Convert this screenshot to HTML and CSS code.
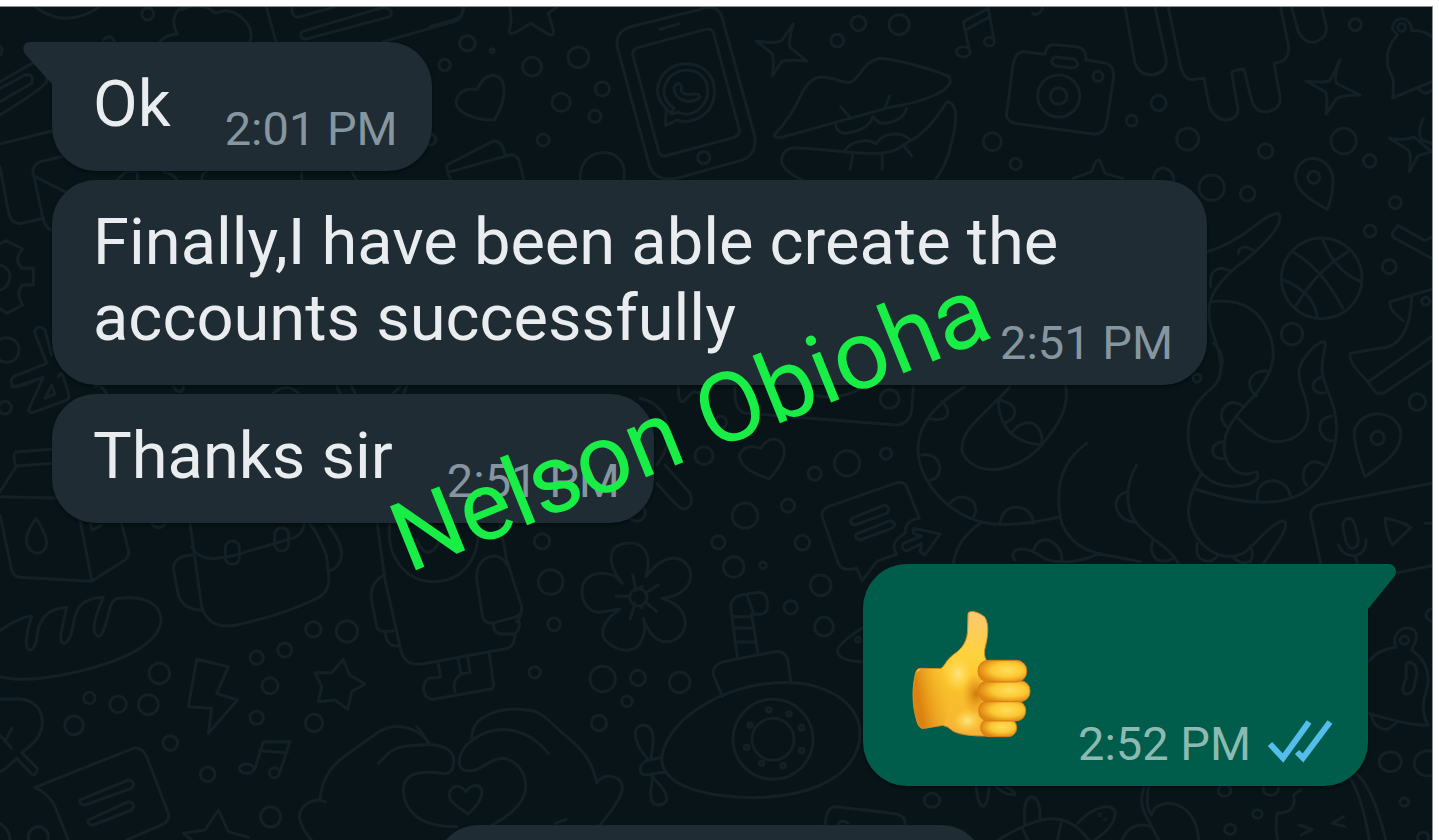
FILE: index.html
```
<!DOCTYPE html>
<html lang="en">
<head>
<meta charset="utf-8">
<title>Chat</title>
<link rel="stylesheet" href="styles.css">
</head>
<body>
<main class="chat">
<svg class="wallpaper" viewBox="0 7 1432 833" preserveAspectRatio="xMinYMin slice" aria-hidden="true">
<g transform="scale(.33333)">
<path d="M108 22Q150 55 200 55Q255 52 295 22M480 125Q500 102 532 102Q505 50 545 22M545 30Q600 0 648 40Q680 22 715 45Q765 80 750 125M800 25L828 125M875 22Q875 55 900 50L1000 22M905 95L1150 22Q1185 30 1170 50L915 118Q895 110 905 95M1388 22Q1390 55 1365 64L1150 125M310 120Q330 100 342 122"/>
<circle cx="443" cy="42" r="18"/><circle cx="1402" cy="130" r="23"/><circle cx="1334" cy="195" r="17"/><circle cx="1290" cy="418" r="17"/><circle cx="-12" cy="152" r="18"/>
<path d="M0 245L100 188Q145 215 140 245Q130 265 0 345M0 265L75 225Q105 220 95 250L0 305M0 432L155 393M0 500L25 635Q35 675 65 670L130 655M195 468L120 485Q90 500 102 530L130 660Q140 690 158 690M105 530L200 578M350 540L378 515H412V540M490 515Q520 520 530 540M605 540Q605 520 620 515M905 515V540M1055 515L1070 540"/>
</g>
<g transform="translate(430) scale(.338 .33333)">
<path d="M100 22Q100 50 70 60L0 80M235 22Q245 55 235 88Q230 105 252 98L298 70L345 100Q370 112 365 90L350 40L375 22M140 268Q160 220 195 227C230 240 225 305 190 360C135 362 70 335 78 300Q90 260 140 268ZM50 495L190 422Q215 425 222 465M62 515L235 465Q262 460 268 500L278 540M50 495Q50 520 62 540M445 540C435 430 595 430 573 540"/>
<circle cx="111" cy="130" r="23"/><circle cx="43" cy="195" r="17"/><circle cx="302" cy="200" r="28"/><circle cx="439" cy="172" r="31"/><circle cx="510" cy="267" r="21"/><circle cx="388" cy="307" r="27"/><circle cx="488" cy="349" r="18"/><circle cx="335" cy="420" r="18"/><circle cx="184" cy="152" r="6"/>
<path d="M800 28Q845 10 862 45L960 405Q970 460 925 480L740 532Q670 550 650 500L555 145Q545 95 595 80ZM815 88Q835 82 840 103L915 388Q918 410 890 415L695 468Q682 470 677 455L600 165Q598 148 615 143ZM680 88L735 72M715 342Q672 305 673 270C680 165 840 165 842 272C840 350 770 375 730 360L697 377L698 335M692 272C700 190 820 190 822 272C820 330 765 355 735 336L712 343L722 325Q692 305 692 272M722 262Q735 240 745 260Q735 285 775 283Q805 278 795 295C765 318 720 295 722 262Z"/><circle cx="810" cy="473" r="18"/>
<path d="M1075 72Q1060 120 1065 142L1115 183Q1060 178 1040 185L1013 228Q1020 180 1012 160L965 123Q1020 132 1040 122ZM1018 405Q1070 350 1100 280Q1130 225 1165 232C1200 235 1220 250 1245 247C1275 230 1285 180 1335 175C1390 180 1510 215 1535 230C1560 265 1470 305 1360 322L1040 412Q1020 415 1018 405ZM1200 375Q1205 400 1230 400Q1300 390 1310 350M1312 350Q1325 370 1340 370Q1400 365 1410 325M1215 320L1245 355M1360 288L1345 325M1225 455C1245 420 1300 415 1320 432C1335 400 1395 390 1420 420M1100 540Q1040 510 1040 480Q1045 435 1100 445C1200 447 1350 485 1400 435C1470 400 1500 350 1530 305Q1575 310 1540 440Q1530 490 1495 540M1250 467L1243 507M1338 467V507M1400 435L1425 467"/>
<circle cx="1205" cy="122" r="19"/><circle cx="1268" cy="70" r="22"/><circle cx="1388" cy="74" r="30"/>
</g>
<g transform="translate(940) scale(.33333)">
<path d="M90 160L70 65L145 25L162 120M80 88L150 50M200 340L218 200Q225 155 250 155L315 163Q320 130 345 134L410 140Q442 145 437 180L500 190Q525 200 520 235L500 370Q490 405 460 402L225 370Q195 360 200 340ZM345 170L405 178Q425 200 395 204L345 197Q325 185 345 170ZM555 22L585 190Q600 228 640 224Q685 215 678 175L645 22M685 22L720 190Q730 245 765 238L792 235L808 320Q830 370 875 357Q900 345 892 315L875 220Q875 210 912 208L935 300Q945 340 985 335Q1025 325 1020 290L1002 190Q1052 185 1045 135L1022 22M1055 22L1075 95Q1095 135 1130 125Q1165 110 1158 75L1145 22M1200 180Q1180 235 1190 250L1260 285Q1210 285 1190 295L1158 343Q1165 290 1155 275L1098 243Q1150 250 1170 242ZM1475 110Q1450 90 1415 92C1415 45 1355 45 1358 88L1372 105C1330 150 1340 200 1352 220Q1365 240 1358 294L1475 245M1435 265Q1455 290 1475 270M1450 355Q1430 400 1445 420L1475 430M1475 455L1435 467L1408 515Q1415 465 1405 450L1348 415Q1400 422 1420 410ZM400 535L455 515Q470 470 480 482L495 520L548 535M640 535Q645 505 670 503Q700 510 702 540M1162 628Q1185 570 1177 525C1160 460 1080 460 1067 520C1060 570 1110 600 1162 628ZM278 40Q295 50 308 25"/>
<ellipse cx="70" cy="155" rx="21" ry="15"/><ellipse cx="148" cy="125" rx="15" ry="13"/><circle cx="356" cy="288" r="63"/><circle cx="356" cy="288" r="25"/><circle cx="474" cy="229" r="15"/><circle cx="157" cy="425" r="27"/><circle cx="227" cy="492" r="17"/><circle cx="656" cy="309" r="23"/><circle cx="575" cy="362" r="16"/><circle cx="743" cy="417" r="33"/><circle cx="977" cy="453" r="22"/><circle cx="1211" cy="423" r="38"/><circle cx="1289" cy="483" r="19"/><circle cx="1246" cy="74" r="18"/><circle cx="1385" cy="82" r="12"/><circle cx="1121" cy="532" r="18"/><circle cx="815" cy="563" r="38"/><circle cx="923" cy="581" r="22"/><circle cx="1366" cy="608" r="18"/>
</g>
<g transform="translate(1120 200) scale(.33333)">
<path d="M262 155C380 120 420 45 475 40C500 70 420 150 350 200C280 260 250 310 275 390C300 460 320 520 280 560C220 610 200 650 205 720C215 820 280 865 350 858C410 855 420 830 410 815C360 835 320 810 312 750C310 680 355 640 400 590C460 520 475 460 445 395Q400 290 275 305M355 160Q355 140 380 142L400 150M272 260Q265 205 310 205L330 212M450 515Q405 505 390 540Q385 570 410 588M372 620Q330 590 308 630Q295 660 325 685M310 725Q270 730 280 762Q290 780 318 775M280 430Q320 460 300 520M355 655C410 710 450 740 510 718C575 690 570 640 555 590C530 530 530 500 560 465Q590 425 612 425C625 435 600 470 607 520C615 570 650 610 650 690C645 800 580 880 500 898C420 920 310 895 225 867M608 530Q575 540 580 565Q595 585 615 578M635 648Q595 655 600 690Q610 725 642 723M612 795Q570 770 552 810Q545 840 560 855M412 898Q410 840 465 842Q505 850 512 890M245 820Q195 900 208 960C230 1040 300 1090 370 1060C410 1030 450 970 490 962C515 975 470 1030 430 1092M232 1030Q225 1060 240 1075Q270 1095 290 1070M340 1072Q360 1095 390 1085Q405 1060 390 1038M50 795C15 850 15 930 50 970C90 1020 150 1040 175 1090M22 875Q-15 885 -12 920Q0 965 50 967M100 1018Q85 1055 110 1078Q135 1090 160 1075"/>
<circle cx="605" cy="235" r="121"/><path d="M518 155Q610 210 668 325M608 117Q640 210 722 245M685 155Q590 210 525 322M490 240Q580 275 592 350"/>
<circle cx="750" cy="93" r="18"/><circle cx="808" cy="200" r="21"/><circle cx="516" cy="402" r="32"/><circle cx="231" cy="534" r="12"/><circle cx="892" cy="606" r="25"/><circle cx="773" cy="714" r="20"/><circle cx="917" cy="304" r="12"/>
<path d="M935 175L820 112Q810 100 835 77L915 122L935 112M935 268L810 305Q805 330 850 362M875 290Q870 440 780 445L690 460Q685 490 745 545L935 410M742 545L770 580H790L935 482M735 830Q695 720 705 685C740 610 850 640 842 710C840 760 780 800 735 830ZM935 850L610 912Q565 920 573 955L602 1090M830 1118L935 1097M668 975Q675 950 695 957Q705 965 715 1020Q715 1045 695 1045Q678 1045 668 975ZM655 1035Q670 1070 705 1067Q740 1060 738 1020M705 1067L712 1090M795 955Q835 960 873 982L818 1035Q800 1010 795 955ZM915 970H935"/>
</g>
<g transform="translate(640 380) scale(.33333)">
<path d="M115 20Q115 70 130 65L160 35L185 40M0 55Q50 65 75 110Q95 170 70 225L50 255M75 255L150 340Q165 380 130 388Q115 385 50 310M285 20Q280 95 320 100L770 135Q810 130 815 90L820 20M520 45Q600 65 670 20M362 205Q385 170 415 180C450 205 430 250 388 297Q300 270 298 225Q315 190 362 205M975 20C820 110 800 220 880 330C980 450 1090 450 1260 410M905 65Q930 85 920 110Q900 125 870 115M845 225Q895 220 900 265Q895 300 870 300M930 370Q960 335 1000 365Q1015 390 1000 412M1080 430Q1090 370 1150 385Q1180 400 1180 430M1110 20C1050 90 950 150 968 220C1010 300 1150 280 1225 170Q1290 90 1277 20M1075 62Q1080 185 1205 195M1080 60Q1140 75 1118 115L1095 130M1115 160Q1140 120 1180 130Q1210 150 1205 190M1340 190C1270 240 1240 320 1265 430C1310 530 1390 520 1500 545M1020 430Q950 480 940 550M1380 520C1300 555 1230 555 1190 520C1130 490 1105 520 1125 540M1180 515Q1190 475 1225 480Q1270 500 1265 545M838 415L800 320Q790 300 765 310L565 380Q540 390 548 415L595 550Q605 575 650 565L667 602L710 545L770 522Q745 490 795 460Q795 420 838 415ZM635 415L735 375Q755 385 740 400L645 435Q625 430 635 415ZM650 462L750 422Q775 430 755 445L660 480Q640 475 650 462ZM790 490L845 468L820 460V445L900 462L855 525L840 515L845 490L800 513Q780 505 790 490Z"/>
<circle cx="242" cy="127" r="18"/><circle cx="192" cy="227" r="27"/><circle cx="621" cy="250" r="38"/><circle cx="738" cy="221" r="17"/><circle cx="524" cy="281" r="20"/><circle cx="444" cy="377" r="20"/><circle cx="315" cy="407" r="38"/><circle cx="235" cy="487" r="20"/><circle cx="487" cy="488" r="22"/><circle cx="281" cy="561" r="31"/><circle cx="369" cy="556" r="10"/><circle cx="542" cy="616" r="31"/><circle cx="452" cy="682" r="20"/><circle cx="552" cy="740" r="28"/><circle cx="654" cy="779" r="7"/><circle cx="749" cy="57" r="28"/>
</g>
<g transform="translate(0 380) scale(.33333)">
<path d="M155 208L50 215Q35 220 48 260L0 335M50 258L155 250M0 350L190 355M0 405L35 570Q40 590 60 592L275 604L375 540Q390 525 385 510L365 432M240 420L275 600M270 432L278 450L305 435M108 415Q75 460 80 490C90 530 140 530 140 485Q135 455 108 415ZM0 752Q60 710 95 708Q75 770 80 800C90 825 110 800 112 760C120 710 150 685 200 682L182 765Q180 790 195 790C220 775 215 730 232 690Q250 655 310 652C290 700 275 740 285 760C305 790 315 735 325 705Q335 655 355 655C440 645 485 675 483 725C470 800 350 850 210 880Q80 910 0 890M0 957H60C115 960 140 1010 120 1060Q110 1085 65 1118L112 1165Q110 1190 95 1182L50 1135Q20 1165 0 1175M0 1065L35 1105M35 1045L15 1085M570 432L605 680C620 730 660 745 710 735C820 710 900 680 940 660Q995 640 985 580L980 530Q960 470 930 432M575 500Q595 540 650 535Q700 530 740 515L860 480Q910 470 912 432M575 525Q520 530 520 565L535 645Q550 690 605 690M985 435Q1035 500 1022 540Q1010 570 985 572M590 838L685 860L650 940L712 960L625 1060L635 985L565 980ZM1030 838L1048 885L1095 912L1055 935L1043 988L1005 960L955 965L965 920L945 878H995ZM765 1165L790 1085H870L840 1175M778 1112L862 1118M105 1222L400 1105Q425 1100 440 1130L505 1300Q510 1325 485 1335L380 1380M105 1222Q150 1245 165 1280L205 1380M240 1260L385 1200Q410 1205 395 1225L255 1275Q235 1275 240 1260ZM265 1320L385 1265Q410 1270 395 1290L280 1335Q260 1335 265 1320ZM575 1380L550 1360L615 1350L655 1290L685 1355L745 1372M35 20Q50 25 100 5M155 15L135 55L165 42ZM0 1330Q30 1350 30 1380M285 20L300 15L320 40M520 20Q540 50 552 20M820 40Q860 5 895 40M1010 20L1020 40M1055 20L1065 40M1180 40L1200 20M1220 20L1210 40"/>
<rect x="676" y="483" width="42" height="70" rx="20"/><rect x="824" y="443" width="42" height="70" rx="20"/>
<ellipse cx="740" cy="1166" rx="22" ry="14"/><circle cx="823" cy="1178" r="15"/>
<circle cx="15" cy="83" r="19"/><circle cx="478" cy="880" r="31"/><circle cx="770" cy="833" r="20"/><circle cx="854" cy="810" r="21"/><circle cx="940" cy="748" r="23"/><circle cx="1041" cy="754" r="32"/><circle cx="810" cy="917" r="24"/><circle cx="770" cy="1013" r="20"/><circle cx="942" cy="1029" r="26"/><circle cx="268" cy="954" r="17"/><circle cx="354" cy="973" r="25"/><circle cx="445" cy="974" r="30"/><circle cx="222" cy="1036" r="28"/><circle cx="511" cy="1089" r="22"/><circle cx="623" cy="1183" r="22"/><circle cx="812" cy="1311" r="30"/><circle cx="115" cy="1370" r="30"/><path d="M455 432Q475 455 495 432"/>
<path d="M960 1255C970 1180 1000 1150 1060 1110L1130 1060Q1180 1025 1240 1050Q1270 1065 1290 1090M1135 1150L1170 1115Q1200 1095 1260 1095M975 1265C940 1250 900 1275 898 1310Q905 1350 935 1380"/>
</g>
<g transform="translate(360 440) scale(.33333)">
<path d="M52 252L75 420L118 610Q125 650 140 662Q155 678 200 670L445 625Q465 615 465 582M75 405Q35 420 33 470L50 560Q55 580 100 572M75 575Q80 620 112 618M90 252C75 350 140 425 220 425C310 425 365 350 353 252M170 300Q205 375 240 300M420 252L440 360L485 500Q485 530 470 545M350 420C345 340 425 330 440 375M350 420L368 530Q375 555 405 548L450 535Q490 530 485 500M400 550Q400 585 430 582H465Q485 560 475 540M235 672L242 712L205 715C180 735 190 780 220 778L390 748Q405 745 400 730L388 640M295 660L303 702L330 697L323 652M303 702Q275 720 285 755M858 410C880 330 840 305 800 310C740 315 740 370 787 430C760 390 690 390 670 430C655 485 690 525 730 515L780 507C730 540 715 580 740 605C780 640 830 640 845 600Q860 570 850 535C865 580 890 610 930 605C990 590 1000 500 905 475C970 470 1000 430 990 390C970 340 910 340 858 410ZM818 405L828 450M895 435L855 460M890 515L855 485M810 538L825 490M768 469H810M825 450L847 440M845 505L847 495"/>
<circle cx="835" cy="472" r="26"/>
<path d="M170 860Q190 880 205 910M180 915C230 910 270 920 280 950C285 990 270 1005 245 1000C180 990 130 1000 130 1050C135 1130 200 1160 290 1160M335 895C335 820 430 800 500 810C550 810 580 860 620 890C670 930 700 970 710 1030C730 990 800 1010 785 1055Q775 1090 720 1155M565 940C500 860 410 850 345 895C290 930 290 980 310 990C360 1005 380 955 430 955C490 965 520 1040 475 1095Q440 1135 395 1155M585 1150L618 1138M318 1055C290 1020 260 1050 270 1075Q275 1090 325 1122C350 1100 370 1070 365 1050C355 1025 325 1040 318 1055Z"/>
<path d="M905 960C910 850 1070 740 1250 728C1400 720 1495 790 1500 875C1500 1000 1370 1070 1180 1073C1010 1070 910 1030 905 960ZM1088 770L1062 710Q1050 680 1090 665L1245 635Q1280 630 1285 670L1292 725M1132 650L1112 500Q1115 465 1160 463L1195 457Q1225 460 1222 495Q1225 520 1200 523H1175L1193 635M1160 463L1182 523M1115 530H1175M1120 563L1180 565M1128 605L1187 607M905 952L860 962C835 975 835 1000 855 1005L920 995M865 960C830 920 805 860 850 855C890 855 880 920 872 955M875 1010C920 1050 930 1080 910 1092C870 1105 865 1070 880 1010M1530 550Q1430 610 1432 635Q1440 665 1510 665M1395 1155Q1400 1100 1425 1100L1560 1115M1435 1155Q1440 1135 1465 1150"/>
<circle cx="1239" cy="898" r="120"/><circle cx="1239" cy="898" r="63"/><circle cx="1226" cy="810" r="7"/><circle cx="1287" cy="822" r="7"/><circle cx="1324" cy="863" r="7"/><circle cx="1325" cy="932" r="7"/><circle cx="1269" cy="977" r="7"/><circle cx="1205" cy="970" r="7"/><circle cx="1160" cy="922" r="7"/><circle cx="1170" cy="855" r="7"/>
<circle cx="546" cy="304" r="23"/><circle cx="572" cy="426" r="37"/><circle cx="582" cy="553" r="19"/><circle cx="524" cy="697" r="17"/><circle cx="728" cy="717" r="38"/><circle cx="834" cy="714" r="23"/><circle cx="959" cy="727" r="31"/><circle cx="801" cy="784" r="16"/><circle cx="717" cy="849" r="23"/><circle cx="830" cy="218" r="26"/>
</g>
<g transform="translate(860 560) scale(.369 .33333)">
<circle cx="195" cy="721" r="21"/><circle cx="1437" cy="605" r="30"/><circle cx="1540" cy="610" r="38"/><circle cx="1475" cy="726" r="12"/><circle cx="1077" cy="762" r="13"/><circle cx="1003" cy="808" r="15"/><circle cx="988" cy="692" r="17"/><circle cx="1113" cy="685" r="21"/><circle cx="1475" cy="241" r="12"/><circle cx="1553" cy="165" r="19"/><circle cx="1526" cy="832" r="15"/>
<path d="M1452 262C1430 200 1520 180 1507 240L1495 270Q1560 320 1530 410Q1520 460 1540 495Q1500 500 1378 460M1452 262Q1400 270 1378 305M1385 465Q1395 510 1430 508L1452 490M1480 310C1505 300 1515 330 1505 360Q1500 410 1475 400Q1465 390 1480 355ZM0 748L100 762Q125 770 122 795M315 682Q320 740 335 738Q345 735 350 682M370 682Q395 705 420 705Q420 690 395 682M375 840C490 760 560 750 620 840M447 795C440 730 455 700 475 715Q490 730 488 780M440 805L455 840M545 790L535 840M590 790C640 730 690 730 692 760Q690 800 635 840M770 682C750 740 780 770 790 800M782 682Q772 740 790 765C800 710 910 710 918 840M710 840Q735 780 790 800L810 840M1320 640Q1360 700 1380 840M1340 635Q1390 680 1425 840M1195 690L1175 705Q1185 760 1130 760Q1125 800 1132 840M1190 795L1225 808L1195 825M1310 770L1280 790L1315 800"/>
<circle cx="650" cy="765" r="2"/><circle cx="665" cy="778" r="2"/>
</g>
<g transform="translate(0 180) scale(.33333)">
<path d="M0 192L18 182L68 207Q40 235 65 265H100V315H68Q45 335 68 375L20 400L0 385M0 255Q30 265 30 292Q25 325 0 330M155 525L135 450Q115 430 103 455L140 550L40 590Q25 610 45 620L130 592L85 690Q90 700 100 697L200 660Q210 655 205 640L190 590Q185 570 175 590"/>
<circle cx="20" cy="510" r="37"/>
</g>
</svg>

<article class="bubble incoming">
<svg class="tail tail-left" viewBox="0 0 38 46" aria-hidden="true"><path d="M38 0H7C0 0-1 7 2 12L29 42V46H38Z" fill="#202c33"/></svg>
<p class="text">Ok</p>
<time class="time">2:01 PM</time>
</article>
<article class="bubble incoming overlap">
<p class="text">Finally,I have been able create the accounts successfully</p>
<time class="time">2:51 PM</time>
</article>
<article class="bubble incoming">
<p class="text">Thanks sir</p>
<time class="time">2:51 PM</time>
</article>
<article class="bubble outgoing">
<svg class="tail tail-right" viewBox="0 0 38 46" aria-hidden="true"><path d="M0 0H21C29 0 31 8 27 13L1 45V46H0Z" fill="#005c4b"/></svg>
<svg class="thumb" viewBox="66 60 360 390" role="img" aria-label="Thumbs up">
<defs>
<linearGradient id="palm" x1="0" y1="0" x2="0" y2="1"><stop offset="0" stop-color="#fbc871"/><stop offset=".35" stop-color="#fed23c"/><stop offset=".65" stop-color="#fac02b"/><stop offset="1" stop-color="#f5b238"/></linearGradient>
<linearGradient id="wristFade" x1="0" y1="0" x2="1" y2="-.3"><stop offset="0" stop-color="#dc820e"/><stop offset=".9" stop-color="#f7be29" stop-opacity="0"/></linearGradient>
<radialGradient id="finger" cx=".6" cy=".45" r=".6"><stop offset="0" stop-color="#ffdf5d"/><stop offset=".55" stop-color="#fbc832"/><stop offset="1" stop-color="#df8512"/></radialGradient>
<radialGradient id="glow"><stop offset="0" stop-color="#ffe682"/><stop offset="1" stop-color="#ffd83f" stop-opacity="0"/></radialGradient>
<radialGradient id="shade"><stop offset="0" stop-color="#cf7a0c"/><stop offset="1" stop-color="#e89a1c" stop-opacity="0"/></radialGradient>
</defs>
<path d="M234 70C242 58 270 68 285 82C298 105 294 140 286 170Q279 195 290 213L300 438Q220 440 190 424Q172 408 158 406L104 415Q88 418 82 398C65 345 66 290 77 248Q81 234 94 235L152 236C165 228 168 210 190 194C220 175 233 150 233 115Z" fill="url(#palm)" stroke="#d98a1c" stroke-width="3"/>
<path d="M94 236L165 238Q195 330 160 405L104 414Q88 416 83 398C66 345 67 290 78 248Z" fill="url(#wristFade)"/>
<ellipse cx="205" cy="252" rx="44" ry="58" fill="url(#glow)"/><ellipse cx="232" cy="392" rx="46" ry="36" fill="url(#glow)"/>
<ellipse cx="258" cy="312" rx="42" ry="62" fill="url(#shade)"/>
<g fill="url(#finger)" stroke="#d87e16" stroke-width="3">
<rect x="272" y="386" width="108" height="54" rx="26"/>
<rect x="266" y="332" width="141" height="61" rx="29"/>
<rect x="264" y="272" width="156" height="63" rx="30"/>
<rect x="264" y="211" width="146" height="65" rx="31"/>
</g>
</svg>
<time class="time">2:52 PM</time>
<svg class="ticks" viewBox="0 0 66 46" role="img" aria-label="Read"><path d="M2 26L15 40L41 4M29 34L35 40L62 4" fill="none" stroke="#53bdeb" stroke-width="6"/></svg>
</article>
<div class="notice"></div>
<div class="name">Nelson Obioha</div>
</main>
</body>
</html>
```
FILE: styles.css
```
* {
  box-sizing: border-box;
}

body {
  margin: 0;
  height: 100vh;
  padding: 6px 6px 0 0;
  overflow: hidden;
  background: #fff;
  font-family: Roboto, "Liberation Sans", sans-serif;
}

.chat {
  position: relative;
  display: flex;
  flex-direction: column;
  align-items: flex-start;
  gap: 9px;
  height: 100%;
  padding: 35px 64px 0 52px;
  overflow: hidden;
  border-top: 1px solid #8b9294;
  border-right: 1px solid #8b9294;
  background: #081418;
}

.wallpaper {
  position: absolute;
  inset: 0;
  width: 100%;
  height: 100%;
  fill: none;
  stroke: #132026;
  stroke-width: 3;
  stroke-linejoin: round;
  stroke-linecap: round;
}

.wallpaper * {
  vector-effect: non-scaling-stroke;
}

.bubble {
  position: relative;
  display: flex;
  flex-shrink: 0;
  align-items: flex-end;
  padding: 24px 34px 14px 41px;
  border-radius: 44px;
  box-shadow: 0 2px 3px rgba(0, 0, 0, 0.4);
}

.incoming {
  gap: 54px;
  background: #202c33;
}

.incoming:has(.tail) {
  border-top-left-radius: 0;
}

.overlap {
  display: grid;
}

.overlap > * {
  grid-area: 1 / 1;
}

.overlap .text {
  max-width: 1080px;
  padding-right: 108px;
}

.overlap .time {
  justify-self: end;
}

.text {
  margin: 0;
  padding-bottom: 15px;
  color: #e9edef;
  font-size: 65px;
  line-height: 76px;
}

.time {
  color: #8696a0;
  font-size: 47px;
  line-height: 56px;
}

.outgoing {
  align-self: flex-end;
  margin-top: 32px;
  border-top-right-radius: 0;
  background: #005c4b;
}

.outgoing .time {
  margin-left: 46px;
  color: #8cbab1;
}

.tail {
  position: absolute;
  top: 0;
  width: 38px;
  height: 46px;
}

.tail-left {
  right: calc(100% - 9px);
}

.tail-right {
  left: calc(100% - 1px);
}

.thumb {
  width: 120px;
  height: 130px;
  margin: 22px 0 32px 8px;
}

.ticks {
  width: 66px;
  height: 46px;
  margin: 0 0 8px 17px;
}

.notice {
  position: relative;
  flex-shrink: 0;
  align-self: center;
  width: 550px;
  height: 96px;
  margin-top: 30px;
  border-radius: 44px;
  background: #202c33;
}

.name {
  position: absolute;
  top: 367px;
  left: 373px;
  color: #18ee46;
  font-size: 97px;
  line-height: 100px;
  white-space: nowrap;
  transform: rotate(-22deg);
}
```
